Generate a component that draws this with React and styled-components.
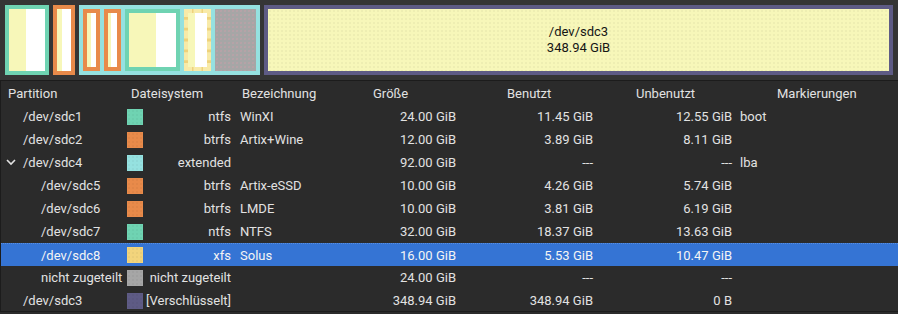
import React from 'react';
import styled, { createGlobalStyle, css } from 'styled-components';

const GlobalStyle = createGlobalStyle`
  html, body {
    margin: 0;
    padding: 0;
    background: #2b2b2b;
  }
  body {
    font-family: Roboto, "Noto Sans", "DejaVu Sans", sans-serif;
    font-size: 13px;
    color: #e2e2e2;
  }
`;

const USED = '#f7f7b9';
const COLUMNS = '124px 111px 132px 93px 137px 139px 1fr';

const dots = css`
  background-image: radial-gradient(rgba(0, 0, 0, 0.035) 0.7px, transparent 0.9px);
  background-size: 4px 4px;
`;

const Window = styled.div`
  width: 898px;
  height: 314px;
  background: #2b2b2b;
  overflow: hidden;
`;

const Graph = styled.div`
  display: flex;
  gap: 4px;
  height: 70px;
  padding: 5px;
  background: #353535;
`;

const Segment = styled.div`
  box-sizing: border-box;
  width: ${p => p.$w}px;
  height: 100%;
  border: 4px solid ${p => p.$color};
  background: ${p => `linear-gradient(to right, ${USED} ${p.$used}%, #fff ${p.$used}%)`};
`;

const DashedSegment = styled(Segment)`
  border: 4px dashed #f8eaa8;
  background: ${p => `linear-gradient(to right, ${USED} ${p.$used}%, #fff ${p.$used}%) padding-box, #eed27c border-box`};
`;

const FreeSegment = styled.div`
  width: ${p => p.$w}px;
  height: 100%;
  background-color: #a6a6a6;
  background-image: radial-gradient(rgba(230, 150, 170, 0.25) 0.7px, transparent 0.9px);
  background-size: 4px 4px;
`;

const Extended = styled.div`
  box-sizing: border-box;
  display: flex;
  gap: 4px;
  width: 181px;
  height: 100%;
  padding: 4px;
  background: #95e1e0;
`;

const Encrypted = styled.div`
  box-sizing: border-box;
  flex: 1;
  display: flex;
  flex-direction: column;
  align-items: center;
  justify-content: center;
  border: 4px solid #5e5b85;
  background-color: ${USED};
  ${dots};
  color: #151515;
  line-height: 16px;
`;

const Table = styled.div`
  border: 1px solid #1c1c1c;
  border-right: none;
  height: 232px;
  box-sizing: border-box;
`;

const Row = styled.div`
  display: grid;
  grid-template-columns: ${COLUMNS};
  height: ${p => (p.$head ? 24 : 23)}px;
  align-items: center;
  box-sizing: border-box;
  ${p =>
    p.$selected &&
    css`
      background: #3574d4;
      border-top: 1px dotted #5a8fe0;
      color: #f4f4f4;
    `}
`;

const HeadCell = styled.div`
  padding-left: ${p => p.$pad}px;
  white-space: nowrap;
`;

const NameCell = styled.div`
  display: flex;
  align-items: center;
  padding-left: ${p => 4 + p.$level * 18}px;
  white-space: nowrap;
`;

const Toggle = styled.span`
  display: flex;
  align-items: center;
  width: 18px;
  height: 16px;
  padding-left: 1px;
  box-sizing: border-box;
`;

const FsCell = styled.div`
  display: flex;
  align-items: center;
  white-space: nowrap;
`;

const Swatch = styled.span`
  flex: none;
  width: 16px;
  height: 16px;
  margin-left: 2px;
  background-color: ${p => p.$color};
  ${dots};
`;

const FsName = styled.span`
  flex: 1;
  text-align: right;
  padding-right: 5px;
`;

const TextCell = styled.div`
  padding-left: ${p => p.$pad}px;
  white-space: nowrap;
`;

const NumCell = styled.div`
  text-align: right;
  padding-right: 5px;
  white-space: nowrap;
`;

const Chevron = () => (
  <svg width="10" height="7" viewBox="0 0 10 7">
    <polyline points="1,1 5,5 9,1" fill="none" stroke="#e2e2e2" strokeWidth="1.6" />
  </svg>
);

const headers = [
  ['Partition', 7],
  ['Dateisystem', 6],
  ['Bezeichnung', 6],
  ['Größe', 5],
  ['Benutzt', 46],
  ['Unbenutzt', 38],
  ['Markierungen', 40],
];

const partitions = [
  { name: '/dev/sdc1', level: 0, fs: 'ntfs', color: '#6fd3b2', label: 'WinXI', size: '24.00 GiB', used: '11.45 GiB', unused: '12.55 GiB', flags: 'boot' },
  { name: '/dev/sdc2', level: 0, fs: 'btrfs', color: '#e88a4a', label: 'Artix+Wine', size: '12.00 GiB', used: '3.89 GiB', unused: '8.11 GiB' },
  { name: '/dev/sdc4', level: 0, open: true, fs: 'extended', color: '#95e1e0', size: '92.00 GiB', used: '---', unused: '---', flags: 'lba' },
  { name: '/dev/sdc5', level: 1, fs: 'btrfs', color: '#e88a4a', label: 'Artix-eSSD', size: '10.00 GiB', used: '4.26 GiB', unused: '5.74 GiB' },
  { name: '/dev/sdc6', level: 1, fs: 'btrfs', color: '#e88a4a', label: 'LMDE', size: '10.00 GiB', used: '3.81 GiB', unused: '6.19 GiB' },
  { name: '/dev/sdc7', level: 1, fs: 'ntfs', color: '#6fd3b2', label: 'NTFS', size: '32.00 GiB', used: '18.37 GiB', unused: '13.63 GiB' },
  { name: '/dev/sdc8', level: 1, fs: 'xfs', color: '#f2d47c', label: 'Solus', size: '16.00 GiB', used: '5.53 GiB', unused: '10.47 GiB', selected: true },
  { name: 'nicht zugeteilt', level: 1, fs: 'nicht zugeteilt', color: '#a6a6a6', size: '24.00 GiB', used: '---', unused: '---' },
  { name: '/dev/sdc3', level: 0, fs: '[Verschlüsselt]', color: '#5e5b85', size: '348.94 GiB', used: '348.94 GiB', unused: '0 B' },
];

const App = () => (
  <Window>
    <GlobalStyle />
    <Graph>
      <Segment $w={44} $color="#6fd3b2" $used={47.7} />
      <Segment $w={22} $color="#e88a4a" $used={32.4} />
      <Extended>
        <Segment $w={17} $color="#e88a4a" $used={42.6} />
        <Segment $w={17} $color="#e88a4a" $used={38.1} />
        <Segment $w={55} $color="#6fd3b2" $used={57.4} />
        <DashedSegment $w={27} $used={34.6} />
        <FreeSegment $w={41} />
      </Extended>
      <Encrypted>
        <span>/dev/sdc3</span>
        <span>348.94 GiB</span>
      </Encrypted>
    </Graph>

    <Table>
      <Row $head>
        {headers.map(([title, pad]) => (
          <HeadCell key={title} $pad={pad}>{title}</HeadCell>
        ))}
      </Row>
      {partitions.map(p => (
        <Row key={p.name + p.level} $selected={p.selected}>
          <NameCell $level={p.level}>
            <Toggle>{p.open && <Chevron />}</Toggle>
            {p.name}
          </NameCell>
          <FsCell>
            <Swatch $color={p.color} />
            <FsName>{p.fs}</FsName>
          </FsCell>
          <TextCell $pad={4}>{p.label}</TextCell>
          <NumCell>{p.size}</NumCell>
          <NumCell>{p.used}</NumCell>
          <NumCell>{p.unused}</NumCell>
          <TextCell $pad={3}>{p.flags}</TextCell>
        </Row>
      ))}
    </Table>
  </Window>
);

export default App;
